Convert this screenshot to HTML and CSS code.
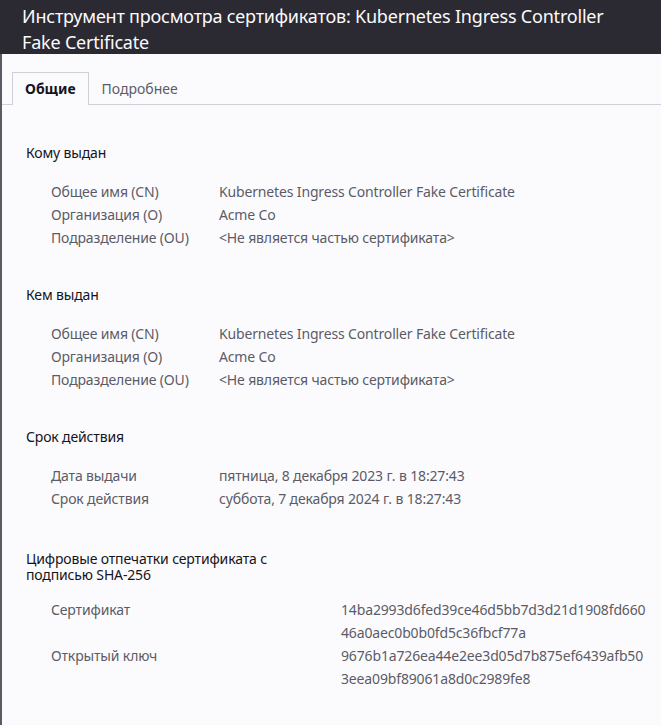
FILE: index.html
```html
<!DOCTYPE html>
<html lang="ru">
<head>
<meta charset="utf-8">
<link rel="stylesheet" href="styles.css">
</head>
<body>
<header class="titlebar">Инструмент просмотра сертификатов: Kubernetes Ingress Controller Fake Certificate</header>
<div class="page">
  <nav class="tabs">
    <div class="tab active">Общие</div>
    <div class="tab">Подробнее</div>
  </nav>
  <main class="content">
    <section class="section">
      <h2 class="heading">Кому выдан</h2>
      <div class="grid">
        <div class="label">Общее имя (CN)</div><div class="value">Kubernetes Ingress Controller Fake Certificate</div>
        <div class="label">Организация (O)</div><div class="value">Acme Co</div>
        <div class="label">Подразделение (OU)</div><div class="value">&lt;Не является частью сертификата&gt;</div>
      </div>
    </section>
    <section class="section">
      <h2 class="heading">Кем выдан</h2>
      <div class="grid">
        <div class="label">Общее имя (CN)</div><div class="value">Kubernetes Ingress Controller Fake Certificate</div>
        <div class="label">Организация (O)</div><div class="value">Acme Co</div>
        <div class="label">Подразделение (OU)</div><div class="value">&lt;Не является частью сертификата&gt;</div>
      </div>
    </section>
    <section class="section">
      <h2 class="heading">Срок действия</h2>
      <div class="grid">
        <div class="label">Дата выдачи</div><div class="value">пятница, 8 декабря 2023 г. в 18:27:43</div>
        <div class="label">Срок действия</div><div class="value">суббота, 7 декабря 2024 г. в 18:27:43</div>
      </div>
    </section>
    <section class="section prints">
      <h2 class="heading narrow">Цифровые отпечатки сертификата с подписью SHA-256</h2>
      <div class="grid wide">
        <div class="label">Сертификат</div><div class="value hash"><span>14ba2993d6fed39ce46d5bb7d3d21d1908fd660</span><span>46a0aec0b0b0fd5c36fbcf77a</span></div>
        <div class="label">Открытый ключ</div><div class="value hash"><span>9676b1a726ea44e2ee3d05d7b875ef6439afb50</span><span>3eea09bf89061a8d0c2989fe8</span></div>
      </div>
    </section>
  </main>
</div>
</body>
</html>
```
FILE: styles.css
```css
html, body {
  margin: 0;
  padding: 0;
  height: 100%;
  background: #fbfbfe;
  font-family: "Noto Sans", "Open Sans", sans-serif;
  overflow: hidden;
}
.titlebar {
  background: #2b2a33;
  color: #fbfbfe;
  font-size: 18px;
  line-height: 26px;
  padding: 3px 20px 0 22px;
  height: 51px;
  box-sizing: content-box;
  letter-spacing: -0.2px;
}
.page {
  border-left: 2px solid #5b5b66;
  min-height: 700px;
}
.tabs {
  display: flex;
  padding: 18px 0 0 10px;
  border-bottom: 1px solid #cfcfd8;
}
.tab {
  font-size: 14px;
  line-height: 20px;
  padding: 6px 12px 5px;
  color: #5b5b66;
  border: 1px solid transparent;
  border-bottom: none;
}
.tab.active {
  color: #15141a;
  font-weight: bold;
  border-color: #cfcfd8;
  background: #fbfbfe;
  margin-bottom: -1px;
  padding-bottom: 6px;
}
.content {
  padding: 38px 0 0 24px;
  font-size: 14px;
  letter-spacing: -0.15px;
}
.section {
  margin-bottom: 36px;
}
.section.prints {
  padding-top: 5px;
}
.heading {
  margin: 0 0 17px;
  font-size: 14px;
  font-weight: normal;
  color: #15141a;
  line-height: 20px;
}
.heading.narrow {
  width: 270px;
  line-height: 16px;
  margin-bottom: 15px;
}
.grid {
  display: grid;
  grid-template-columns: 168px 1fr;
  padding-left: 25px;
  line-height: 23px;
  color: #5b5b66;
}
.grid.wide {
  grid-template-columns: 290px 1fr;
}
.hash {
  display: flex;
  flex-direction: column;
}
```
